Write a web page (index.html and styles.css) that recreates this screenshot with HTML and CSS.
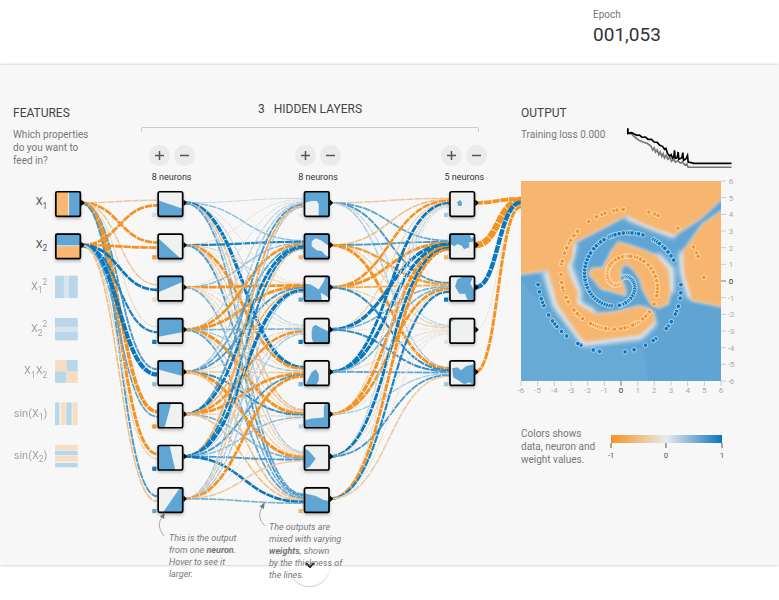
FILE: index.html
```html
<!DOCTYPE html>
<html lang="en">
<head>
  <meta charset="UTF-8">
  <meta name="viewport" content="width=device-width, initial-scale=1.0">
  <title>Neural Network Playground</title>
  <link rel="stylesheet" href="styles.css">
</head>
<body>
  <header class="top-controls">
    <div class="epoch">
      <span class="epoch-label">Epoch</span>
      <span class="epoch-value">001,053</span>
    </div>
  </header>

  <main class="playground">
    <section class="network">
      <div class="network-head">
        <div class="features">
          <h2>Features</h2>
          <p>Which properties<br>do you want to<br>feed in?</p>
        </div>
        <div class="hidden-layers">
          <h2><span class="layer-count">3</span>Hidden layers</h2>
          <div class="bracket"></div>
          <div class="layer-controls">
            <div class="layer-control">
              <div class="layer-buttons">
                <button type="button" aria-label="Add neuron"><svg viewBox="0 0 42 42"><path d="M12 21h18M21 12v18"/></svg></button>
                <button type="button" aria-label="Remove neuron"><svg viewBox="0 0 42 42"><path d="M12 21h18"/></svg></button>
              </div>
              <span>8 neurons</span>
            </div>
            <div class="layer-control">
              <div class="layer-buttons">
                <button type="button" aria-label="Add neuron"><svg viewBox="0 0 42 42"><path d="M12 21h18M21 12v18"/></svg></button>
                <button type="button" aria-label="Remove neuron"><svg viewBox="0 0 42 42"><path d="M12 21h18"/></svg></button>
              </div>
              <span>8 neurons</span>
            </div>
            <div class="layer-control">
              <div class="layer-buttons">
                <button type="button" aria-label="Add neuron"><svg viewBox="0 0 42 42"><path d="M12 21h18M21 12v18"/></svg></button>
                <button type="button" aria-label="Remove neuron"><svg viewBox="0 0 42 42"><path d="M12 21h18"/></svg></button>
              </div>
              <span>5 neurons</span>
            </div>
          </div>
        </div>
      </div>

      <div class="diagram">
        <svg id="network-svg" viewBox="0 0 616 396">
          <defs>
            <filter id="soft"><feGaussianBlur stdDeviation="0.5"/></filter>
            <filter id="drop" x="-30%" y="-30%" width="160%" height="170%"><feDropShadow dx="0" dy="2" stdDeviation="2" flood-opacity="0.25"/></filter>
          </defs>
          <g id="links"></g>
          <g id="nodes"></g>
          <g class="arrows">
            <path d="M194 415Q183 402 193 391"/>
            <path class="tip" d="M195 387l-6 5 5 3z"/>
            <path d="M313 403Q302 392 311 379"/>
            <path class="tip" d="M313 375l-6 5 5 3z"/>
          </g>
        </svg>
        <p class="callout callout-neuron">This is the output<br>from one <b>neuron</b>.<br>Hover to see it<br>larger.</p>
        <p class="callout callout-weights">The outputs are<br>mixed with varying<br><b>weights</b>, shown<br>by the thickness of<br>the lines.</p>
      </div>
    </section>

    <section class="output">
      <h2>Output</h2>
      <div class="metrics">
        <p>Training loss 0.000</p>
        <svg class="loss-chart" viewBox="351 116 314 120">
          <path class="train" d="M353 119V133L364 133 372 142 385 152 398 158 411 162 422 170 428 182 432 176 436 188 441 182 446 196 450 188 455 201 459 193 463 206 468 198 473 210 479 204 484 216 490 210 496 219 503 214 510 221 517 218 524 227 530 224 534 234H664"/>
          <path class="test" d="M353 117V132L364 130 372 134 380 138 388 137 396 144 406 143 414 150 424 150 432 158 441 159 449 168 457 171 463 180 467 177 472 192 478 200 483 196 487 206 491 202 493 183 495 207 501 205 504 188 506 210 512 207 515 205 518 190 520 213 527 209 532 198 534 218 543 220 550 222H664"/>
        </svg>
      </div>

      <svg id="heatmap" viewBox="0 0 224 218">
        <defs>
          <filter id="melt" x="-5%" y="-5%" width="110%" height="110%"><feGaussianBlur stdDeviation="5"/></filter>
          <filter id="haze" x="-20%" y="-20%" width="140%" height="140%"><feGaussianBlur stdDeviation="8"/></filter>
        </defs>
        <svg x="0" y="4" width="200" height="200" viewBox="18 18 600 600">
          <path fill="#5fa4d3" d="M0 0H640V640H0z"/>
          <path fill="#68aad6" d="M0 300L200 520 385 520 403 640H0z"/>
          <path class="fog" filter="url(#haze)" d="M92 288L122 390 178 465 208 505 375 485 420 440M468 355V285L425 240M178 205L160 270 190 350 188 385 240 415M335 124L480 182M500 230L505 295 528 370"/>
          <g class="regions" filter="url(#melt)">
            <path d="M-20 -20H650V45L560 130 480 182 420 163 372 143 335 124 320 131 260 163 178 205 174 250 160 270 165 300 190 350 188 385 240 415 300 410 370 392 400 398 418 412 422 440 375 482 208 503 178 465 125 388 98 288 -20 304z"/>
            <path d="M310 200L370 218 425 240 462 285 468 350 460 388 430 400 405 385 385 350 372 310 355 285 333 268 318 280 320 310 332 340 332 362 258 342 220 297 228 280 262 278 290 225z"/>
            <path d="M650 85L560 148 502 230 505 295 530 378 650 402z"/>
          </g>
        </svg>
        <g id="dots"></g>
        <g id="axes"></g>
      </svg>

      <div class="legend">
        <p>Colors shows<br>data, neuron and<br>weight values.</p>
        <svg class="colormap" viewBox="0 0 120 36">
          <defs>
            <linearGradient id="scale">
              <stop offset="0" stop-color="#f59322"/>
              <stop offset="0.5" stop-color="#e8eaeb"/>
              <stop offset="1" stop-color="#0877bd"/>
            </linearGradient>
          </defs>
          <path fill="url(#scale)" d="M5 2h111v8H5z"/>
          <path class="ticks" d="M5 10v5M60 10v5M116 10v5"/>
          <text x="5" y="25">-1</text>
          <text x="60" y="25">0</text>
          <text x="116" y="25">1</text>
        </svg>
      </div>
    </section>
  </main>

  <footer class="article">
    <a class="more" href="#article" aria-label="More"><svg viewBox="0 0 10 6"><path d="M1 1l4 4 4-4"/></svg></a>
  </footer>

  <script src="script.js"></script>
</body>
</html>
```
FILE: styles.css
```css
body {
  margin: 0;
  background: #fff;
  color: #777;
  font-family: Roboto, "Liberation Sans", sans-serif;
  font-size: 10px;
  line-height: 13px;
}

h2 {
  margin: 0;
  color: #444;
  font-size: 12px;
  font-weight: 400;
  line-height: 16px;
  text-transform: uppercase;
}

p {
  margin: 0;
}

/* Top bar */
.top-controls {
  display: flex;
  box-sizing: border-box;
  height: 65px;
  padding-top: 8px;
  padding-left: 76%;
}

.epoch {
  display: flex;
  flex-direction: column;
  padding-left: 1px;
}

.epoch-value {
  margin-top: 2px;
  color: #333;
  font-size: 19px;
  line-height: 24px;
}

/* Main part */
.playground {
  display: grid;
  grid-template-columns: 521fr 258fr;
  background: #f7f7f7;
  box-shadow: 0 0 3px rgba(0, 0, 0, 0.3);
}

.network {
  padding-bottom: 45px;
}

.network-head {
  display: grid;
  grid-template-columns: 27fr 65fr 8fr;
  height: 120px;
}

.features {
  padding-top: 40px;
  padding-left: 13px;
}

.features p {
  margin-top: 7px;
}

/* Hidden layers */
.hidden-layers {
  padding-top: 36px;
}

.hidden-layers h2 {
  text-align: center;
}

.layer-count {
  margin-right: 9px;
}

.bracket {
  height: 4px;
  margin-top: 10px;
  border: 1px solid #ccc;
  border-bottom: 0;
  border-radius: 2px 2px 0 0;
}

.layer-controls {
  display: flex;
  justify-content: space-between;
  margin-top: 13px;
  margin-right: -16px;
}

.layer-control {
  width: 62px;
  color: #333;
  font-size: 9px;
  text-align: center;
}

.layer-buttons {
  display: flex;
  justify-content: center;
  gap: 4px;
  margin-bottom: 5px;
}

.layer-buttons button {
  width: 21px;
  height: 21px;
  padding: 0;
  border: 0;
  border-radius: 50%;
  background: #ebebeb;
  cursor: pointer;
}

.layer-buttons svg {
  display: block;
  stroke: #555;
  stroke-width: 3;
}

/* Network diagram */
.diagram {
  position: relative;
}

#network-svg {
  display: block;
  width: 100%;
  overflow: visible;
}

#links path {
  fill: none;
  stroke-dasharray: 9 1;
}

.frame {
  fill: none;
  stroke: #000;
  stroke-width: 2;
}

.area {
  fill: #61a6d5;
}

.neg {
  fill: #f9b771;
}

.feature-label {
  fill: #555;
  font-size: 13px;
  text-anchor: end;
}

.feature-label .small {
  font-size: 10px;
}

.inactive {
  opacity: 0.4;
}

.inactive .feature-label {
  fill: #222;
}

.arrows path {
  fill: none;
  stroke: #999;
}

.arrows .tip {
  fill: #777;
  stroke: none;
}

.callout {
  position: absolute;
  z-index: 2;
  font-size: 9px;
  font-style: italic;
  line-height: 12px;
  white-space: nowrap;
}

.callout-neuron {
  top: 347px;
  left: 169px;
}

.callout-weights {
  top: 336px;
  left: 269px;
}

/* Output */
.output {
  padding-top: 40px;
}

.metrics {
  display: flex;
  height: 49px;
  padding-top: 7px;
}

.metrics p {
  width: 106px;
  white-space: nowrap;
}

.loss-chart {
  width: 105px;
  height: 40px;
}

.loss-chart path {
  fill: none;
  stroke-width: 5;
}

.loss-chart .train {
  stroke: #777;
}

.loss-chart .test {
  stroke: #000;
}

#heatmap {
  display: block;
  width: 224px;
  max-width: 100%;
  overflow: visible;
}

.regions path {
  fill: #f6b670;
  stroke: #e8eaeb;
  stroke-width: 3;
}

.fog {
  fill: none;
  stroke: #e8eaeb;
  stroke-width: 20;
}

#dots circle {
  stroke: #fff;
  stroke-opacity: 0.6;
}

#axes line {
  stroke: #ccc;
}

#axes text {
  fill: #aaa;
  font-size: 8px;
  text-anchor: middle;
}

#axes .zero line {
  stroke: #777;
}

#axes .zero text {
  fill: #333;
}

.legend {
  display: flex;
  gap: 11px;
  margin-top: 32px;
}

.legend p {
  white-space: nowrap;
}

.colormap {
  width: 120px;
  height: 36px;
  margin-top: 6px;
}

.ticks {
  stroke: #555;
}

.colormap text {
  fill: #555;
  font-size: 8px;
  text-anchor: middle;
}

/* Article below */
.article {
  position: relative;
  height: 35px;
}

.more {
  position: absolute;
  top: -20px;
  left: 289px;
  display: flex;
  justify-content: center;
  align-items: center;
  width: 41px;
  height: 41px;
  border-radius: 50%;
  background: #fff;
  box-shadow: 0 1px 1px rgba(0, 0, 0, 0.2);
}

.more svg {
  width: 10px;
  fill: none;
  stroke: #222;
  stroke-width: 2;
}
```
FILE: script.js
```js
const ROW = 50;
const TOP = 21;
const BOX = 31;
const LAYER_X = [65, 186, 359, 531];
const OUTPUT_X = 616;

const FEATURES = [
  { label: ['X', '1', ''], bands: [['neg', 0, 0, 13, 26], ['area', 14, 0, 12, 26]] },
  { label: ['X', '2', ''], bands: [['area', 0, 0, 26, 12], ['neg', 0, 13, 26, 13]] },
  { label: ['X', '1', '2'], bands: [['area', 0, 0, 10, 26], ['area', 16, 0, 10, 26]], base: '#a5cce3' },
  { label: ['X', '2', '2'], bands: [['area', 0, 0, 26, 10], ['area', 0, 16, 26, 10]], base: '#a5cce3' },
  { label: ['X', '1', '', 'X', '2'], bands: [['neg', 0, 0, 13, 13], ['area', 13, 0, 13, 13], ['area', 0, 13, 13, 13], ['neg', 13, 13, 13, 13]] },
  { label: ['sin(X', '1', '', ')'], bands: [['area', 0, 0, 5, 26], ['neg', 7, 0, 5, 26], ['area', 13, 0, 6, 26], ['neg', 20, 0, 6, 26]] },
  { label: ['sin(X', '2', '', ')'], bands: [['neg', 0, 0, 26, 6], ['area', 0, 7, 26, 5], ['neg', 0, 13, 26, 6], ['area', 0, 21, 26, 5]] }
];

// blue area of each neuron, on a 26 x 26 grid
const NEURONS = [
  [
    '0,9 26,18 26,26 0,26', '0,4 24,26 0,26', '0,0 26,0 26,6 0,17', '0,0 26,0 26,14 0,19',
    '0,0 26,0 26,16 0,9', '0,0 14,0 7,26 0,26', '0,0 12,0 18,26 0,26', '23,0 26,0 26,26 5,26'
  ],
  [
    '0,0 26,0 26,26 15,26 15,13 13,10 8,10 0,12',
    '0,0 26,0 26,18 24,12 17,7 12,5 8,8 8,13 13,17 18,18 22,22 26,23 26,26 0,26',
    '0,8 7,9 15,14 20,6 22,0 26,0 26,23 22,20 17,17 18,24 19,26 0,26',
    '8,13 9,9 12,7 17,10 26,14 26,26 10,26 8,20',
    '3,22 8,12 12,9 15,14 15,20 12,26 2,26',
    '0,18 8,16 20,15 20,4 22,0 26,0 26,26 0,26',
    '0,3 5,6 12,14 6,22 0,25',
    '0,6 12,9 20,13 26,14 26,26 0,26'
  ],
  [
    '8,11 11,9 13,12 12,15 9,15',
    '0,0 20,0 22,5 26,3 26,8 20,9 20,14 15,16 12,12 8,11 5,13 0,10',
    '8,4 14,1 24,1 21,8 25,15 25,26 18,24 16,18 10,18 6,11',
    '1,1 5,1 4,3 1,5',
    '3,8 8,7 12,10 17,6 26,4 26,26 20,22 15,24 9,20 4,17'
  ]
];

const BIASES = [
  [0.1, -0.9, -0.2, 1, 0.4, -1, 1, 0.6],
  [0, -0.6, 0.6, 1, 0.5, 0.2, 0, -0.6],
  [0.3, -0.6, 1, 0.05, 0.3]
];

// weights[layer][source][target]
const WEIGHTS = [
  [
    [-0.4, -1.2, -0.4, -0.2, 0.7, -1.8, -1.4, 0.7],
    [-1.2, -1.2, 1.2, 0.9, 2.2, 0.6, -0.3, -0.5]
  ],
  [
    [0.15, 0.4, -0.1, 0.2, 1.7, -0.5, 0.3, 0.6],
    [-0.1, 0.9, -0.3, 0.1, -1.3, -0.4, -0.3, 0.7],
    [0.1, 0.4, -1.2, -0.1, -0.2, -0.2, -0.2, 0.5],
    [0.2, -1.2, -1.3, 0.5, 0.3, -1.5, -0.3, 0.6],
    [0.3, 0.6, 0.7, -0.2, -0.4, 0.8, -1.5, -0.5],
    [0.7, 1.3, -0.6, -1.0, -1.2, -0.3, 0.5, -0.5],
    [-0.7, 0.9, 1.7, 0.2, 0.7, 0.4, 0.7, 1.2],
    [0.3, -0.4, 0.3, 0.3, -1.3, -0.1, -0.4, 0.5]
  ],
  [
    [-0.4, 0.6, 0.7, 0.2, 0.3],
    [-0.5, 0.7, -0.9, -0.3, -1.4],
    [-1.1, -1.4, -0.7, -0.3, 0.8],
    [-0.3, 1.6, 0.5, 0.05, 0.8],
    [1.3, 1.6, 0.5, -0.2, 0.6],
    [-0.3, -1.5, -1.2, -0.1, 0.3],
    [0.2, 1.3, -0.2, -0.1, 0.7],
    [0.1, -1.3, 0.9, -0.1, -0.4]
  ],
  [[-1.9], [-3.7], [2.3], [-0.1], [-1.4]]
];

// training points still on the spiral, as steps out of 250
const BLUE = [
  11, 15, 18, 21, 24, 27, 30, 33, 36, 39, 42, 45, 48, 51, 54, 57, 60, 63, 65, 67, 70, 72, 73, 80, 82, 84, 86, 88,
  90, 92, 94, 96, 98, 100, 102, 103, 105, 107, 108, 110, 112, 114, 116, 118, 120, 122, 124, 127, 129, 131, 132, 134,
  137, 138, 139, 140, 142, 144, 146, 147, 148, 150, 151, 153, 158, 159, 160, 161, 163, 164, 166, 168, 170, 180, 183,
  185, 188, 190, 191, 194, 196, 197, 202, 203, 206, 210, 213, 221, 223, 227, 228, 232, 234, 236, 237, 238, 240, 243,
  244, 245, 247, 249
];
const ORANGE = [
  11, 15, 19, 23, 27, 30, 33, 36, 39, 42, 45, 48, 50, 52, 54, 56, 58, 61, 64, 66, 69, 73, 76, 77, 78, 80, 84, 86,
  88, 91, 95, 98, 101, 104, 107, 110, 112, 114, 116, 121, 126, 128, 129, 131, 134, 135, 136, 137, 140, 141, 143, 146,
  149, 150, 152, 153, 154, 155, 156, 157, 161, 163, 164, 166, 170, 172, 175, 176, 178, 181, 185, 186, 189, 191, 193,
  194, 196, 198, 203, 206, 208, 209, 212, 213, 215, 223, 225, 226, 233, 240, 242, 243, 249
];

function el(name, attrs, parent) {
  const node = document.createElementNS('http://www.w3.org/2000/svg', name);
  for (const key in attrs) node.setAttribute(key, attrs[key]);
  parent.appendChild(node);
  return node;
}

function color(value) {
  const v = Math.max(-1, Math.min(1, value));
  const end = v < 0 ? [245, 147, 34] : [8, 119, 189];
  const mid = [232, 234, 235];
  const rgb = mid.map((c, i) => Math.round(c + (end[i] - c) * Math.abs(v)));
  return `rgb(${rgb})`;
}

function rowY(i) {
  return TOP + i * ROW;
}

function drawLinks() {
  const links = document.getElementById('links');
  WEIGHTS.forEach((layer, l) => {
    layer.forEach((targets, s) => {
      targets.forEach((w, t) => {
        const x1 = LAYER_X[l] + BOX;
        const x2 = l === 3 ? OUTPUT_X : LAYER_X[l + 1];
        const y1 = rowY(s);
        const y2 = rowY(t) + (s - (layer.length - 1) / 2) / layer.length * 12;
        const mid = (x1 + x2) / 2;
        el('path', {
          d: `M${x1} ${y1}C${mid} ${y1} ${mid} ${y2} ${x2} ${y2}`,
          stroke: color(w),
          'stroke-width': 1 + Math.abs(w) * 1.8
        }, links);
      });
    });
  });
}

function drawBox(x, y, size, parent) {
  return el('svg', { x, y: y - 14, width: size, height: size, viewBox: '0 0 26 26' }, parent);
}

function drawFrame(x, y, parent) {
  el('rect', { class: 'frame', x: x + 1, y: y - 13, width: BOX - 2, height: BOX - 2, rx: 2 }, parent);
}

function drawConnector(x, y, parent) {
  el('path', { d: `M${x + BOX} ${y - 4}l4 4-4 4z` }, parent);
}

function drawFeatures() {
  const nodes = document.getElementById('nodes');
  FEATURES.forEach((f, i) => {
    const active = i < 2;
    const g = el('g', active ? {} : { class: 'inactive' }, nodes);
    const y = rowY(i);
    const text = el('text', { class: 'feature-label', x: 56, y: y + 3 }, g);
    f.label.forEach((part, n) => {
      const small = n === 1 || n === 2 || n === 4;
      const shift = [0, 4, -10, -4, 4][n];
      if (!part) return;
      el('tspan', { dy: shift, class: small ? 'small' : '' }, text).textContent = part;
    });
    const box = el('g', active ? { filter: 'url(#drop)' } : {}, g);
    const inner = drawBox(65, y, active ? BOX : 27, box);
    el('rect', { width: 26, height: 26, rx: 2, fill: f.base || '#e8eaeb' }, inner);
    const bands = el('g', { filter: 'url(#soft)' }, inner);
    f.bands.forEach(([cls, x, by, width, height]) => el('rect', { class: cls, x, y: by, width, height }, bands));
    if (active) {
      drawFrame(65, y, box);
      drawConnector(65, y, g);
    }
  });
}

function drawNeurons() {
  const nodes = document.getElementById('nodes');
  NEURONS.forEach((layer, l) => {
    layer.forEach((points, i) => {
      const x = LAYER_X[l + 1];
      const y = rowY(i);
      const g = el('g', { filter: 'url(#drop)' }, nodes);
      const inner = drawBox(x, y, BOX, g);
      el('rect', { width: 26, height: 26, rx: 2, fill: '#eff1f1' }, inner);
      el('polygon', { class: 'area', points, filter: 'url(#soft)' }, inner);
      drawFrame(x, y, g);
      el('rect', { x: x - 6, y: y + 12, width: 5, height: 5, fill: color(BIASES[l][i]) }, nodes);
      drawConnector(x, y, nodes);
    });
  });
}

function drawDots(steps, fill, sign) {
  const dots = document.getElementById('dots');
  steps.forEach(i => {
    const r = i / 250 * 5;
    const t = 1.75 * i / 250 * 2 * Math.PI;
    const cx = 100 + sign * r * Math.sin(t) * 100 / 6;
    const cy = 104 - sign * r * Math.cos(t) * 100 / 6;
    el('circle', { cx, cy, r: 2.3, fill }, dots);
  });
}

function drawAxes() {
  const axes = document.getElementById('axes');
  for (let v = -6; v <= 6; v++) {
    const pos = 100 + v * 100 / 6;
    const g = el('g', { class: v === 0 ? 'zero' : '' }, axes);
    el('line', { x1: pos, x2: pos, y1: 204, y2: 209 }, g);
    el('text', { x: pos, y: 216 }, g).textContent = v;
    el('line', { x1: 200, x2: 205, y1: 204 - pos, y2: 204 - pos }, g);
    el('text', { x: 210, y: 207 - pos }, g).textContent = v;
  }
}

drawLinks();
drawFeatures();
drawNeurons();
drawDots(ORANGE, '#f59322', -1);
drawDots(BLUE, '#0877bd', 1);
drawAxes();
```
